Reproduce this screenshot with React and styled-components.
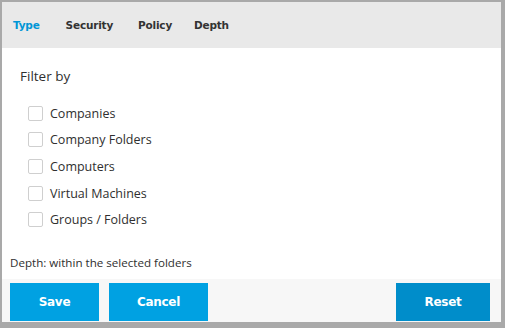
import React from 'react';
import styled, { createGlobalStyle } from 'styled-components';

const Global = createGlobalStyle`
    html, body {
        margin: 0;
        background: #a9a9a9;
    }
    body {
        font-family: "Segoe UI", "Open Sans", "Liberation Sans", sans-serif;
    }
`;

const Frame = styled.div`
    width: 505px;
    height: 328px;
    padding: 2px 0 0 2px;
    box-sizing: border-box;
`;

const Panel = styled.div`
    width: 499px;
    height: 320px;
    background: #fff;
    display: flex;
    flex-direction: column;
`;

const Tabs = styled.nav`
    height: 46px;
    background: #e9e9e9;
    display: flex;
    align-items: center;
    padding: 0 0 0 11px;
`;

const Tab = styled.span`
    font-family: "DejaVu Sans", Verdana, sans-serif;
    font-size: 10.5px;
    font-weight: bold;
    color: ${(props) => (props.active ? '#0096d6' : '#333')};
    margin-right: ${(props) => props.gap}px;
    letter-spacing: -0.2px;
`;

const Body = styled.div`
    flex: 1;
    display: flex;
    flex-direction: column;
    padding: 19px 0 0 0;
    color: #2f2f2f;
`;

const Title = styled.div`
    font-size: 13.5px;
    font-weight: 500;
    padding-left: 18px;
    line-height: 18px;
`;

const List = styled.div`
    display: flex;
    flex-direction: column;
    gap: 11.7px;
    padding: 20.5px 0 0 26px;
`;

const Row = styled.label`
    display: flex;
    align-items: center;
    gap: 7px;
    font-size: 12.5px;
    line-height: 15px;
    color: #2f2f2f;
`;

const Box = styled.span`
    width: 13px;
    height: 13px;
    border: 1px solid #cfcfcf;
    border-radius: 2px;
    background: #fff;
`;

const Note = styled.div`
    margin-top: auto;
    font-size: 11.6px;
    padding: 0 0 9px 8px;
`;

const Footer = styled.div`
    height: 43px;
    background: #f7f7f7;
    display: flex;
    align-items: flex-start;
    padding: 4px 11px 0 8px;
    box-sizing: border-box;
    gap: 10px;
`;

const Button = styled.button`
    width: ${(props) => props.w}px;
    height: 38px;
    border: 0;
    margin-left: ${(props) => (props.push ? 'auto' : '0')};
    background: ${(props) => (props.dark ? '#008dca' : '#00a1e2')};
    color: #fff;
    font-family: "DejaVu Sans", Verdana, sans-serif;
    font-size: 12px;
    font-weight: bold;
    letter-spacing: -0.3px;
`;

const items = ['Companies', 'Company Folders', 'Computers', 'Virtual Machines', 'Groups / Folders'];

const App = () => (
    <Frame>
        <Global />
        <Panel>
            <Tabs>
                <Tab active gap={26}>Type</Tab>
                <Tab gap={25}>Security</Tab>
                <Tab gap={22}>Policy</Tab>
                <Tab gap={0}>Depth</Tab>
            </Tabs>
            <Body>
                <Title>Filter by</Title>
                <List>
                    {items.map((item) => (
                        <Row key={item}><Box />{item}</Row>
                    ))}
                </List>
                <Note>Depth: within the selected folders</Note>
            </Body>
            <Footer>
                <Button w={89}>Save</Button>
                <Button w={99}>Cancel</Button>
                <Button w={94} dark push>Reset</Button>
            </Footer>
        </Panel>
    </Frame>
);

export default App;
